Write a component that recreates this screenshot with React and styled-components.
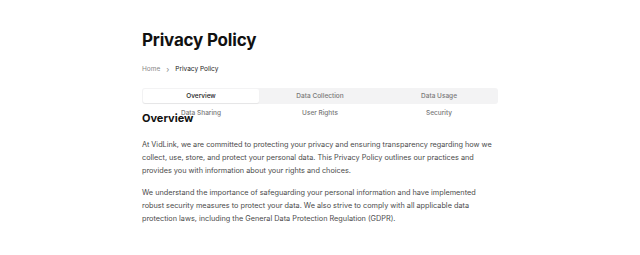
import React, { useState } from "react";
import styled, { createGlobalStyle } from "styled-components";

const GlobalStyle = createGlobalStyle`
	* { box-sizing: border-box; }
	body {
		margin: 0;
		background: #fff;
		font-family: Inter, "Liberation Sans", sans-serif;
		color: #111827;
	}
`;

const tabs = [
	"Overview",
	"Data Collection",
	"Data Usage",
	"Data Sharing",
	"User Rights",
	"Security",
];

function App() {
	const [active, setActive] = useState(0);

	return (
		<>
			<GlobalStyle />
			<Page>
				<Title>Privacy Policy</Title>
				<Breadcrumb>
					<Crumb>Home</Crumb>
					<Separator>›</Separator>
					<Crumb current>Privacy Policy</Crumb>
				</Breadcrumb>
				<TabList>
					{tabs.map((tab, i) => (
						<Tab key={tab} active={i === active} onClick={() => setActive(i)}>
							{tab}
						</Tab>
					))}
				</TabList>
				<Section>
					<SectionTitle>Overview</SectionTitle>
					<Paragraph>
						At VidLink, we are committed to protecting your privacy and ensuring
						transparency regarding how we collect, use, store, and protect your
						personal data. This Privacy Policy outlines our practices and
						provides you with information about your rights and choices.
					</Paragraph>
					<Paragraph>
						We understand the importance of safeguarding your personal
						information and have implemented robust security measures to protect
						your data. We also strive to comply with all applicable data
						protection laws, including the General Data Protection Regulation
						(GDPR).
					</Paragraph>
				</Section>
			</Page>
		</>
	);
}

export default App;

const Page = styled.main`
	width: 356px;
	margin: 0 auto;
	padding-top: 28px;
`;

const Title = styled.h1`
	margin: 0;
	font-size: 17px;
	font-weight: 700;
	line-height: 24px;
	letter-spacing: -0.2px;
	color: #111;
`;

const Breadcrumb = styled.nav`
	display: flex;
	align-items: center;
	gap: 6px;
	margin-top: 12px;
	font-size: 6.5px;
	line-height: 10px;
`;

const Crumb = styled.span`
	color: ${({ current }) => (current ? "#222" : "#888")};
`;

const Separator = styled.span`
	color: #888;
	font-size: 8px;
`;

const TabList = styled.div`
	display: grid;
	grid-template-columns: repeat(3, 1fr);
	grid-auto-rows: 14px;
	gap: 3px;
	height: 16px;
	margin-top: 14px;
	padding: 1px;
	background: #f3f3f4;
	border-radius: 3px;
`;

const Tab = styled.button`
	border: none;
	border-radius: 2px;
	background: ${({ active }) => (active ? "#fff" : "transparent")};
	box-shadow: ${({ active }) => (active ? "0 1px 1px rgba(0,0,0,0.06)" : "none")};
	font-family: inherit;
	font-size: 6.5px;
	font-weight: 500;
	color: ${({ active }) => (active ? "#222" : "#777")};
	cursor: pointer;
	padding: 0;
`;

const Section = styled.section`
	margin-top: 7px;
`;

const SectionTitle = styled.h2`
	margin: 0 0 13px;
	font-size: 11px;
	font-weight: 700;
	line-height: 14px;
	color: #111;
`;

const Paragraph = styled.p`
	margin: 0 0 9px;
	font-size: 7.3px;
	line-height: 13px;
	color: #4b4b4b;
`;
